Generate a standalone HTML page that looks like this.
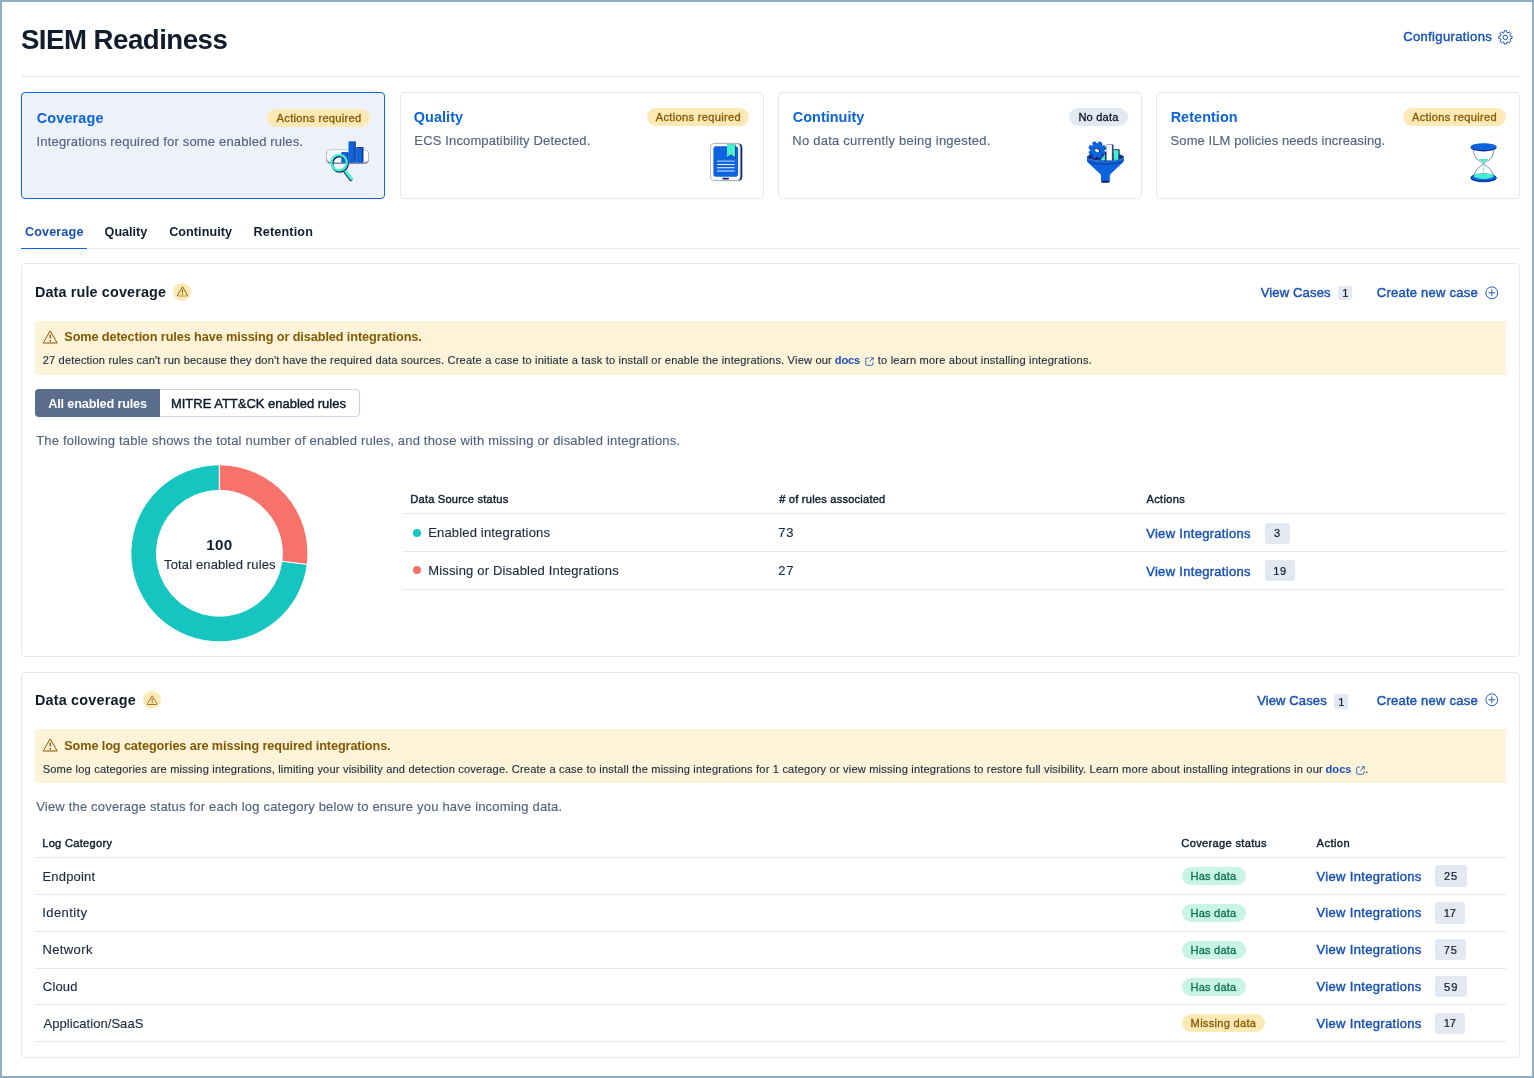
<!DOCTYPE html>
<html lang="en"><head><meta charset="utf-8"><title>SIEM Readiness</title>
<meta name="viewport" content="width=1534">
<style>
*{box-sizing:border-box;margin:0;padding:0}
html,body{width:1534px;height:1078px;overflow:hidden;background:#fff}
body{font-family:"Liberation Sans",sans-serif;color:#1d2a3e;-webkit-font-smoothing:antialiased}
#app{will-change:transform;position:relative;width:1534px;height:1078px;overflow:hidden}
#frame{position:absolute;left:0;top:0;width:1534px;height:1078px;border:2px solid #8fafc0;z-index:9;pointer-events:none}
.abs,.t,.ic{position:absolute}
.t{white-space:nowrap;display:block;font-weight:400}
a.t{text-decoration:none}
button.t{background:none;border:0;font-family:inherit;padding:0;margin:0}
.ic{display:block;overflow:visible}
.hr{position:absolute;height:1px;background:#e3e8f2}
.card{position:absolute;top:92px;width:364px;height:107px;border-radius:4px;border:1px solid #e3e8f2;background:#fff}
.card.sel{border-color:#0b64dd;background:#ecf1fa;box-shadow:inset 0 0 0 1px #f3f4f9}
.pill{position:absolute;border-radius:9px}
.panel{position:absolute;left:21px;width:1499px;border:1px solid #e3e8f2;border-radius:4px;background:#fff}
.callout{position:absolute;background:#fdf3d8}
.cnt{position:absolute;background:#e3e8f2;border-radius:3px}
.circ{position:absolute;border-radius:50%}
ul,li{list-style:none}
</style></head><body><div id="app">
<header>
<h1 class="t" style="left:20.91px;top:24.00px;font-size:27.6px;line-height:31px;color:#111c2c;font-weight:700;letter-spacing:-0.483px;">SIEM Readiness</h1>
<a class="t" style="left:1403.15px;top:29.00px;font-size:13.0px;line-height:15px;color:#1750ba;letter-spacing:0.368px;-webkit-text-stroke:0.42px currentColor;">Configurations</a>
<svg class="ic" style="left:1498.30px;top:29.60px" width="14.8" height="14.8" viewBox="0 0 16 16"><path d="M6.56 2.59 L6.80 0.80 L9.20 0.80 L9.44 2.59 L10.81 3.16 L12.24 2.06 L13.94 3.76 L12.84 5.19 L13.41 6.56 L15.20 6.80 L15.20 9.20 L13.41 9.44 L12.84 10.81 L13.94 12.24 L12.24 13.94 L10.81 12.84 L9.44 13.41 L9.20 15.20 L6.80 15.20 L6.56 13.41 L5.19 12.84 L3.76 13.94 L2.06 12.24 L3.16 10.81 L2.59 9.44 L0.80 9.20 L0.80 6.80 L2.59 6.56 L3.16 5.19 L2.06 3.76 L3.76 2.06 L5.19 3.16Z" fill="none" stroke="#1750ba" stroke-width="1.05" stroke-linejoin="round"/><circle cx="8" cy="8" r="2.4" fill="none" stroke="#1750ba" stroke-width="1.05"/></svg>
<div class="hr" style="left:21px;top:76px;width:1499px"></div>
</header>
<section id="cards">
<article class="card sel" style="left:21px">
<h3 class="t" style="left:14.72px;top:16.80px;font-size:14.4px;line-height:16px;color:#0b64dd;font-weight:700;letter-spacing:0.163px;">Coverage</h3>
<p class="t" style="left:14.53px;top:40.80px;font-size:13.0px;line-height:15px;color:#516381;letter-spacing:0.177px;-webkit-text-stroke:0.14px currentColor;">Integrations required for some enabled rules.</p>
<span class="pill" style="left:245.00px;top:16.00px;width:103.00px;height:18px;background:#fde9b5"></span>
<span class="t" style="left:254.60px;top:18.90px;font-size:11.1px;line-height:12px;color:#825803;letter-spacing:0.294px;-webkit-text-stroke:0.3px currentColor;">Actions required</span>
<svg class="ic" style="left:298.00px;top:43.00px" width="56" height="50" viewBox="320 136 56 50" >
<rect x="326.3" y="150.2" width="42.6" height="13.4" rx="4.2" fill="#14246b"/>
<rect x="326.6" y="149.7" width="42" height="12.7" rx="4" fill="#fff" stroke="#bcc3d6" stroke-width="0.9"/>
<rect x="342" y="152.3" width="6.6" height="10.2" fill="#14246b"/>
<rect x="341.2" y="152.3" width="6.2" height="10.2" fill="#0b64dd"/>
<rect x="349" y="141.4" width="6.8" height="21.1" rx="0.6" fill="#14246b"/>
<rect x="348.5" y="141.8" width="6.1" height="20.7" fill="#0b64dd"/>
<rect x="356.6" y="147.1" width="6.8" height="15.4" rx="0.5" fill="#14246b"/>
<rect x="356.2" y="147.6" width="6" height="14.9" fill="#0b64dd"/>
<circle cx="339.9" cy="163.8" r="7.8" fill="none" stroke="#14246b" stroke-width="2.4"/>
<path d="M345.4 172.2L350.9 179.4" stroke="#14246b" stroke-width="3.3" stroke-linecap="round"/>
<path d="M345.8 171.6L351.3 178.7" stroke="#48efcf" stroke-width="2.9" stroke-linecap="round"/>
<circle cx="339.1" cy="162.6" r="7.8" fill="none" stroke="#48efcf" stroke-width="2.3"/>
</svg>
</article>
<article class="card" style="left:400px">
<h3 class="t" style="left:12.72px;top:15.80px;font-size:14.4px;line-height:16px;color:#0b64dd;font-weight:700;letter-spacing:0.102px;">Quality</h3>
<p class="t" style="left:13.36px;top:39.80px;font-size:13.0px;line-height:15px;color:#516381;letter-spacing:0.140px;-webkit-text-stroke:0.14px currentColor;">ECS Incompatibility Detected.</p>
<span class="pill" style="left:246.00px;top:15.00px;width:102.20px;height:18px;background:#fde9b5"></span>
<span class="t" style="left:254.80px;top:17.90px;font-size:11.1px;line-height:12px;color:#825803;letter-spacing:0.308px;-webkit-text-stroke:0.3px currentColor;">Actions required</span>
<svg class="ic" style="left:305.00px;top:46.00px" width="42" height="46" viewBox="706 139 42 46" >
<rect x="711.6" y="143.4" width="30.7" height="37.4" rx="4" fill="#14246b"/>
<rect x="710.5" y="143.4" width="29.7" height="37.2" rx="3.6" fill="#fff" stroke="#aab1c6" stroke-width="0.9"/>
<rect x="713.4" y="146.3" width="24.7" height="30.4" rx="2.8" fill="#0b64dd"/>
<path d="M727.3 144.4h8.3v13.6l-4.1-2.9-4.2 2.9z" fill="#14246b"/>
<path d="M727 144.2h8v13l-4-2.8-4 2.8z" fill="#48efcf"/>
<path d="M717 161.2h17.6M717 171h17.6" stroke="#fff" stroke-opacity=".6" stroke-width="1.3"/>
<path d="M717 164.5h17.6M717 167.7h17.6" stroke="#fff" stroke-opacity=".95" stroke-width="1.1"/>
<rect x="722.3" y="177.8" width="6.8" height="1.6" rx="0.8" fill="#14246b"/>
</svg>
</article>
<article class="card" style="left:778px">
<h3 class="t" style="left:13.82px;top:15.80px;font-size:14.4px;line-height:16px;color:#0b64dd;font-weight:700;letter-spacing:0.039px;">Continuity</h3>
<p class="t" style="left:13.36px;top:39.80px;font-size:13.0px;line-height:15px;color:#516381;letter-spacing:0.225px;-webkit-text-stroke:0.14px currentColor;">No data currently being ingested.</p>
<span class="pill" style="left:290.00px;top:15.00px;width:59.00px;height:18px;background:#e3e8f2"></span>
<span class="t" style="left:299.41px;top:17.90px;font-size:11.1px;line-height:12px;color:#0a1424;letter-spacing:0.182px;-webkit-text-stroke:0.3px currentColor;">No data</span>
<svg class="ic" style="left:303.00px;top:45.00px" width="48" height="48" viewBox="1082 138 48 48" >
<ellipse cx="1105.4" cy="157" rx="18.5" ry="4" fill="#1a2f80"/>
<path d="M1098.47 144.66 L1099.56 142.63 L1101.99 143.64 L1101.32 145.84 L1102.56 147.08 L1104.76 146.41 L1105.77 148.84 L1103.74 149.93 L1103.74 151.67 L1105.77 152.76 L1104.76 155.19 L1102.56 154.52 L1101.32 155.76 L1101.99 157.96 L1099.56 158.97 L1098.47 156.94 L1096.73 156.94 L1095.64 158.97 L1093.21 157.96 L1093.88 155.76 L1092.64 154.52 L1090.44 155.19 L1089.43 152.76 L1091.46 151.67 L1091.46 149.93 L1089.43 148.84 L1090.44 146.41 L1092.64 147.08 L1093.88 145.84 L1093.21 143.64 L1095.64 142.63 L1096.73 144.66Z" fill="#14246b" stroke="#14246b" stroke-width="1" stroke-linejoin="round"/>
<path d="M1097.97 143.76 L1099.06 141.73 L1101.49 142.74 L1100.82 144.94 L1102.06 146.18 L1104.26 145.51 L1105.27 147.94 L1103.24 149.03 L1103.24 150.77 L1105.27 151.86 L1104.26 154.29 L1102.06 153.62 L1100.82 154.86 L1101.49 157.06 L1099.06 158.07 L1097.97 156.04 L1096.23 156.04 L1095.14 158.07 L1092.71 157.06 L1093.38 154.86 L1092.14 153.62 L1089.94 154.29 L1088.93 151.86 L1090.96 150.77 L1090.96 149.03 L1088.93 147.94 L1089.94 145.51 L1092.14 146.18 L1093.38 144.94 L1092.71 142.74 L1095.14 141.73 L1096.23 143.76Z" fill="#0b64dd" stroke="#0b64dd" stroke-width="1" stroke-linejoin="round"/>
<ellipse cx="1097.4" cy="150.3" rx="2.6" ry="2.1" fill="#14246b" transform="rotate(30 1097.4 150.3)"/>
<ellipse cx="1097" cy="150.6" rx="2.1" ry="1.5" fill="#fff" transform="rotate(30 1097 150.6)"/>
<path d="M1100.2 160.2l4.9-6.2v6.6z" fill="#48efcf"/>
<rect x="1105.2" y="152" width="1.6" height="9" fill="#14246b"/>
<rect x="1106.6" y="144.4" width="6.9" height="16.2" rx="0.8" fill="#14246b"/>
<rect x="1106.6" y="144.7" width="5.4" height="15.9" rx="0.6" fill="#fff" stroke="#9aa3bd" stroke-width="0.5"/>
<rect x="1113.6" y="149.2" width="6" height="10.6" fill="#14246b"/>
<rect x="1113.7" y="150.1" width="4.7" height="9.8" fill="#48efcf"/>
<path d="M1086.9 157 A18.5 4 0 0 0 1123.9 157 L1123.9 160.2 Q1123.9 161.6 1122.6 162.8 L1110.6 174 Q1109.8 174.8 1109.8 176 L1109.8 181.6 A4.4 1.1 0 0 1 1101 181.6 L1101 176 Q1101 174.8 1100.2 174 L1088.2 162.8 Q1086.9 161.6 1086.9 160.2 Z" fill="#0b64dd"/>
<path d="M1087.3 160.6 A18.3 4.2 0 0 0 1123.5 160.6" fill="none" stroke="#14246b" stroke-width="0.7"/>
<ellipse cx="1105.4" cy="181.8" rx="4.3" ry="1" fill="#14246b"/>
</svg>
</article>
<article class="card" style="left:1156px">
<h3 class="t" style="left:13.66px;top:15.80px;font-size:14.4px;line-height:16px;color:#0b64dd;font-weight:700;letter-spacing:0.070px;">Retention</h3>
<p class="t" style="left:13.62px;top:39.80px;font-size:13.0px;line-height:15px;color:#516381;letter-spacing:0.083px;-webkit-text-stroke:0.14px currentColor;">Some ILM policies needs increasing.</p>
<span class="pill" style="left:246.00px;top:15.00px;width:102.60px;height:18px;background:#fde9b5"></span>
<span class="t" style="left:255.00px;top:17.90px;font-size:11.1px;line-height:12px;color:#825803;letter-spacing:0.301px;-webkit-text-stroke:0.3px currentColor;">Actions required</span>
<svg class="ic" style="left:309.00px;top:47.00px" width="36" height="44" viewBox="1466 140 36 44" >
<ellipse cx="1483.6" cy="178.2" rx="13" ry="4.1" fill="#0a3fae"/>
<ellipse cx="1483.6" cy="177.4" rx="12.6" ry="3.6" fill="#0b64dd"/>
<ellipse cx="1483.6" cy="177.6" rx="12.6" ry="3.6" fill="none" stroke="#0a2f9a" stroke-width="0.8"/>
<path d="M1474.4 173.8h18.5l.6 2.2a9.6 2.9 0 0 1-19.7 0z" fill="#48efcf"/>
<path d="M1473.4 150.4C1474.4 157.6 1477.4 160.2 1480.4 161.2 1482.2 162 1483 162.6 1483 163.4 1483 164.4 1481.6 165.6 1479.6 167 1476.4 169.4 1474.8 172 1474.2 175" fill="none" stroke="#66708f" stroke-width="0.8"/>
<path d="M1493.8 150.4C1492.8 157.6 1489.8 160.2 1486.8 161.2 1485 162 1484.2 162.6 1484.2 163.4 1484.2 164.4 1485.6 165.6 1487.6 167 1490.8 169.4 1492.4 172 1493 175" fill="none" stroke="#66708f" stroke-width="0.8"/>
<path d="M1478.6 158.9h10c-1.4 1.4-3 2-4 2.8-.5.6-.6 1.4-.6 1.8h-.8c0-.4-.1-1.2-.6-1.8-1-.8-2.600-1.400-4-2.800z" fill="#48efcf"/>
<path d="M1483.6 163.4v10.4" stroke="#48efcf" stroke-width="0.9" stroke-dasharray="3.2 0.8"/>
<ellipse cx="1483.6" cy="147.6" rx="13" ry="3.9" fill="#0f2a86"/>
<ellipse cx="1483.6" cy="146.7" rx="12.9" ry="3.5" fill="#0b64dd"/>
</svg>
</article>
</section>
<nav id="tabs">
<a class="t" style="left:24.90px;top:225.00px;font-size:12.6px;line-height:14px;color:#1750ba;font-weight:700;letter-spacing:0.157px;">Coverage</a>
<a class="t" style="left:104.60px;top:225.00px;font-size:12.6px;line-height:14px;color:#111c2c;font-weight:700;letter-spacing:0.005px;">Quality</a>
<a class="t" style="left:169.20px;top:225.00px;font-size:12.6px;line-height:14px;color:#111c2c;font-weight:700;letter-spacing:0.063px;">Continuity</a>
<a class="t" style="left:253.48px;top:225.00px;font-size:12.6px;line-height:14px;color:#111c2c;font-weight:700;letter-spacing:0.165px;">Retention</a>
<div class="hr" style="left:88px;top:248px;width:1432px;background:#e8ecf5"></div>
<div class="hr" style="left:21px;top:248px;width:66px;background:#0b64dd"></div>
</nav>
<section class="panel" style="top:263px;height:394px">
<h2 class="t" style="left:12.96px;top:20.00px;font-size:14.4px;line-height:16px;color:#111c2c;font-weight:700;letter-spacing:0.130px;">Data rule coverage</h2>
<span class="circ" style="left:151.00px;top:19.00px;width:18.0px;height:18.0px;background:#fde9b5"></span>
<svg class="ic" style="left:154.50px;top:22.10px" width="11.0" height="11.0" viewBox="0 0 16 16"><g fill="#825803"><path d="M8.55 9.5l.35-3.5a.9.9 0 1 0-1.8 0l.35 3.5a.55.55 0 0 0 1.1 0zM9 12a1 1 0 1 1-2 0 1 1 0 0 1 2 0z"/><path d="M8.86 1.5a1 1 0 0 0-1.72 0l-7 12A1 1 0 0 0 1 15h14a1 1 0 0 0 .86-1.5l-7-12zM1 14L8 2l7 12H1z"/></g></svg>
<a class="t" style="left:1238.70px;top:21.00px;font-size:13.0px;line-height:15px;color:#1750ba;letter-spacing:0.161px;-webkit-text-stroke:0.42px currentColor;">View Cases</a>
<span class="cnt" style="left:1316.10px;top:22.30px;width:13.80px;height:13.40px;border-radius:2px"></span>
<span class="t" style="left:1320.27px;top:22.90px;font-size:11.1px;line-height:12px;color:#111c2c;-webkit-text-stroke:0.22px currentColor;">1</span>
<a class="t" style="left:1354.75px;top:21.00px;font-size:13.0px;line-height:15px;color:#1750ba;letter-spacing:0.238px;-webkit-text-stroke:0.42px currentColor;">Create new case</a>
<svg class="ic" style="left:1463.20px;top:21.50px" width="13.6" height="13.6" viewBox="0 0 16 16"><circle cx="8" cy="8" r="7" fill="none" stroke="#1750ba" stroke-width="1.1"/><path d="M8 4v8M4 8h8" stroke="#1750ba" stroke-width="1.1" fill="none"/></svg>
<div class="callout" style="left:13px;top:57px;width:1471px;height:54px">
<svg class="ic" style="left:7.80px;top:9.30px" width="14.4" height="14.4" viewBox="0 0 16 16"><g fill="#825803"><path d="M8.55 9.5l.35-3.5a.9.9 0 1 0-1.8 0l.35 3.5a.55.55 0 0 0 1.1 0zM9 12a1 1 0 1 1-2 0 1 1 0 0 1 2 0z"/><path d="M8.86 1.5a1 1 0 0 0-1.72 0l-7 12A1 1 0 0 0 1 15h14a1 1 0 0 0 .86-1.5l-7-12zM1 14L8 2l7 12H1z"/></g></svg>
<h4 class="t" style="left:29.28px;top:9.00px;font-size:12.7px;line-height:14px;color:#825803;font-weight:700;letter-spacing:-0.095px;">Some detection rules have missing or disabled integrations.</h4>
<p class="t" style="left:7.65px;top:33.00px;font-size:11.1px;line-height:12px;color:#1d2a3e;letter-spacing:0.175px;-webkit-text-stroke:0.14px currentColor;">27 detection rules can't run because they don't have the required data sources. Create a case to initiate a task to install or enable the integrations. View our</p><a class="t" style="left:799.86px;top:33.00px;font-size:11.1px;line-height:12px;color:#1750ba;font-weight:700;letter-spacing:-0.216px;">docs</a><svg class="ic" style="left:829.20px;top:34.60px" width="11" height="11" viewBox="0 0 16 16"><path d="M7 3H4a1.5 1.5 0 0 0-1.5 1.5v7.5A1.5 1.5 0 0 0 4 13.5h7.5A1.5 1.5 0 0 0 13 12V9" fill="none" stroke="#1750ba" stroke-width="1.2"/><path d="M9.5 2.5h4v4M13.3 2.7L7.5 8.5" fill="none" stroke="#1750ba" stroke-width="1.2"/></svg><span class="t" style="left:842.83px;top:33.00px;font-size:11.1px;line-height:12px;color:#1d2a3e;letter-spacing:0.185px;-webkit-text-stroke:0.14px currentColor;">to learn more about installing integrations.</span>
</div>
<div class="abs" style="left:13px;top:125px;width:325px;height:28px;border:1px solid #cad3e2;border-radius:4px;background:#fff"></div>
<div class="abs" style="left:13px;top:125px;width:125px;height:28px;border-radius:4px 0 0 4px;background:#5a6d8c"></div>
<button class="t" style="left:26.25px;top:132.50px;font-size:12.7px;line-height:14px;color:#ffffff;font-weight:700;letter-spacing:-0.170px;">All enabled rules</button>
<button class="t" style="left:148.96px;top:131.50px;font-size:13.0px;line-height:15px;color:#111c2c;letter-spacing:-0.014px;-webkit-text-stroke:0.42px currentColor;">MITRE ATT&amp;CK enabled rules</button>
<p class="t" style="left:14.14px;top:169.00px;font-size:13.0px;line-height:15px;color:#516381;letter-spacing:0.195px;-webkit-text-stroke:0.14px currentColor;">The following table shows the total number of enabled rules, and those with missing or disabled integrations.</p>
<svg class="ic" style="left:103.00px;top:195.00px" width="190" height="190" viewBox="125 459 190 190" ><path d="M307.20 564.39A88.5 88.5 0 1 1 219.40 464.80L219.40 490.30A63.0 63.0 0 1 0 281.90 561.20Z" fill="#16c5c0" stroke="#fff" stroke-width="0.9"/><path d="M219.40 464.80A88.5 88.5 0 0 1 307.20 564.39L281.90 561.20A63.0 63.0 0 0 0 219.40 490.30Z" fill="#f6726a" stroke="#fff" stroke-width="0.9"/></svg>
<strong class="t" style="left:184.29px;top:271.80px;font-size:15.2px;line-height:17px;color:#111c2c;font-weight:700;letter-spacing:0.261px;">100</strong>
<span class="t" style="left:142.04px;top:293.00px;font-size:13.0px;line-height:15px;color:#1d2a3e;letter-spacing:0.133px;-webkit-text-stroke:0.14px currentColor;">Total enabled rules</span>
<div class="abs" role="table" style="left:381px;top:221px;width:1103px;height:106px">
<span class="t" style="left:7.31px;top:8.20px;font-size:11.1px;line-height:12px;color:#111c2c;letter-spacing:0.208px;-webkit-text-stroke:0.4px currentColor;">Data Source status</span>
<span class="t" style="left:376.20px;top:8.20px;font-size:11.1px;line-height:12px;color:#111c2c;letter-spacing:0.216px;-webkit-text-stroke:0.4px currentColor;"># of rules associated</span>
<span class="t" style="left:743.40px;top:8.20px;font-size:11.1px;line-height:12px;color:#111c2c;letter-spacing:0.351px;-webkit-text-stroke:0.4px currentColor;">Actions</span>
<div class="hr" style="left:0;top:28px;width:1103px"></div>
<div class="hr" style="left:0;top:66px;width:1103px"></div>
<div class="hr" style="left:0;top:104px;width:1103px"></div>
<span class="circ" style="left:10.20px;top:44.00px;width:8px;height:8px;background:#16c5c0"></span>
<span class="t" style="left:25.16px;top:39.80px;font-size:13.0px;line-height:15px;color:#1d2a3e;letter-spacing:0.172px;-webkit-text-stroke:0.14px currentColor;">Enabled integrations</span>
<span class="t" style="left:375.15px;top:39.80px;font-size:13.0px;line-height:15px;color:#1d2a3e;letter-spacing:0.850px;-webkit-text-stroke:0.14px currentColor;">73</span>
<a class="t" style="left:743.20px;top:40.80px;font-size:13.0px;line-height:15px;color:#1750ba;letter-spacing:0.304px;-webkit-text-stroke:0.42px currentColor;">View Integrations</a>
<span class="cnt" style="left:861.90px;top:37.70px;width:25.00px;height:21.2px"></span><span class="t" style="left:871.01px;top:42.25px;font-size:11.1px;line-height:12px;color:#111c2c;-webkit-text-stroke:0.22px currentColor;">3</span>
<span class="circ" style="left:10.20px;top:81.30px;width:8px;height:8px;background:#f6726a"></span>
<span class="t" style="left:25.16px;top:77.70px;font-size:13.0px;line-height:15px;color:#1d2a3e;letter-spacing:0.178px;-webkit-text-stroke:0.14px currentColor;">Missing or Disabled Integrations</span>
<span class="t" style="left:375.15px;top:77.70px;font-size:13.0px;line-height:15px;color:#1d2a3e;letter-spacing:0.850px;-webkit-text-stroke:0.14px currentColor;">27</span>
<a class="t" style="left:743.20px;top:78.70px;font-size:13.0px;line-height:15px;color:#1750ba;letter-spacing:0.304px;-webkit-text-stroke:0.42px currentColor;">View Integrations</a>
<span class="cnt" style="left:861.90px;top:75.20px;width:30.00px;height:21.2px"></span><span class="t" style="left:870.37px;top:79.75px;font-size:11.1px;line-height:12px;color:#111c2c;letter-spacing:0.405px;-webkit-text-stroke:0.22px currentColor;">19</span>
</div>
</section>
<section class="panel" style="top:672px;height:386px">
<h2 class="t" style="left:12.96px;top:18.70px;font-size:14.4px;line-height:16px;color:#111c2c;font-weight:700;letter-spacing:0.191px;">Data coverage</h2>
<span class="circ" style="left:120.80px;top:17.80px;width:18.6px;height:18.6px;background:#fde9b5"></span>
<svg class="ic" style="left:124.95px;top:21.58px" width="10.3" height="10.3" viewBox="0 0 16 16"><g fill="#825803"><path d="M8.55 9.5l.35-3.5a.9.9 0 1 0-1.8 0l.35 3.5a.55.55 0 0 0 1.1 0zM9 12a1 1 0 1 1-2 0 1 1 0 0 1 2 0z"/><path d="M8.86 1.5a1 1 0 0 0-1.72 0l-7 12A1 1 0 0 0 1 15h14a1 1 0 0 0 .86-1.5l-7-12zM1 14L8 2l7 12H1z"/></g></svg>
<a class="t" style="left:1235.20px;top:19.70px;font-size:13.0px;line-height:15px;color:#1750ba;letter-spacing:0.117px;-webkit-text-stroke:0.42px currentColor;">View Cases</a>
<span class="cnt" style="left:1311.90px;top:21.30px;width:14.00px;height:14.40px;border-radius:2px"></span>
<span class="t" style="left:1316.17px;top:23.20px;font-size:11.1px;line-height:12px;color:#111c2c;-webkit-text-stroke:0.22px currentColor;">1</span>
<a class="t" style="left:1354.75px;top:19.70px;font-size:13.0px;line-height:15px;color:#1750ba;letter-spacing:0.238px;-webkit-text-stroke:0.42px currentColor;">Create new case</a>
<svg class="ic" style="left:1463.20px;top:20.20px" width="13.6" height="13.6" viewBox="0 0 16 16"><circle cx="8" cy="8" r="7" fill="none" stroke="#1750ba" stroke-width="1.1"/><path d="M8 4v8M4 8h8" stroke="#1750ba" stroke-width="1.1" fill="none"/></svg>
<div class="callout" style="left:13px;top:56px;width:1471px;height:54px">
<svg class="ic" style="left:7.80px;top:9.30px" width="14.4" height="14.4" viewBox="0 0 16 16"><g fill="#825803"><path d="M8.55 9.5l.35-3.5a.9.9 0 1 0-1.8 0l.35 3.5a.55.55 0 0 0 1.1 0zM9 12a1 1 0 1 1-2 0 1 1 0 0 1 2 0z"/><path d="M8.86 1.5a1 1 0 0 0-1.72 0l-7 12A1 1 0 0 0 1 15h14a1 1 0 0 0 .86-1.5l-7-12zM1 14L8 2l7 12H1z"/></g></svg>
<h4 class="t" style="left:29.28px;top:10.00px;font-size:12.7px;line-height:14px;color:#825803;font-weight:700;letter-spacing:-0.108px;">Some log categories are missing required integrations.</h4>
<p class="t" style="left:7.70px;top:34.20px;font-size:11.1px;line-height:12px;color:#1d2a3e;letter-spacing:0.174px;-webkit-text-stroke:0.14px currentColor;">Some log categories are missing integrations, limiting your visibility and detection coverage. Create a case to install the missing integrations for 1 category or view missing integrations to restore full visibility. Learn more about installing integrations in our</p><a class="t" style="left:1290.56px;top:34.20px;font-size:11.1px;line-height:12px;color:#1750ba;font-weight:700;letter-spacing:0.018px;">docs</a><svg class="ic" style="left:1320.00px;top:35.80px" width="11" height="11" viewBox="0 0 16 16"><path d="M7 3H4a1.5 1.5 0 0 0-1.5 1.5v7.5A1.5 1.5 0 0 0 4 13.5h7.5A1.5 1.5 0 0 0 13 12V9" fill="none" stroke="#1750ba" stroke-width="1.2"/><path d="M9.5 2.5h4v4M13.3 2.7L7.5 8.5" fill="none" stroke="#1750ba" stroke-width="1.2"/></svg><span class="t" style="left:1330.30px;top:34.20px;font-size:11.1px;line-height:12px;color:#1d2a3e;-webkit-text-stroke:0.14px currentColor;">.</span>
</div>
<p class="t" style="left:14.20px;top:125.80px;font-size:13.0px;line-height:15px;color:#516381;letter-spacing:0.188px;-webkit-text-stroke:0.14px currentColor;">View the coverage status for each log category below to ensure you have incoming data.</p>
<div class="abs" role="table" style="left:13px;top:157px;width:1471px;height:213px">
<span class="t" style="left:7.21px;top:7.30px;font-size:11.1px;line-height:12px;color:#111c2c;letter-spacing:0.289px;-webkit-text-stroke:0.4px currentColor;">Log Category</span>
<span class="t" style="left:1146.35px;top:7.30px;font-size:11.1px;line-height:12px;color:#111c2c;letter-spacing:0.319px;-webkit-text-stroke:0.4px currentColor;">Coverage status</span>
<span class="t" style="left:1281.60px;top:7.30px;font-size:11.1px;line-height:12px;color:#111c2c;letter-spacing:0.429px;-webkit-text-stroke:0.4px currentColor;">Action</span>
<div class="hr" style="left:0;top:27px;width:1471px"></div>
<div class="hr" style="left:0;top:64px;width:1471px"></div>
<div class="hr" style="left:0;top:101px;width:1471px"></div>
<div class="hr" style="left:0;top:138px;width:1471px"></div>
<div class="hr" style="left:0;top:174px;width:1471px"></div>
<div class="hr" style="left:0;top:211px;width:1471px"></div>
<span class="t" style="left:7.46px;top:39.10px;font-size:13.0px;line-height:15px;color:#1d2a3e;letter-spacing:0.194px;-webkit-text-stroke:0.14px currentColor;">Endpoint</span>
<span class="pill" style="left:1146.70px;top:37.20px;width:64.4px;height:17.8px;background:#c9f3e3"></span>
<span class="t" style="left:1155.61px;top:40.20px;font-size:11.1px;line-height:12px;color:#09724d;letter-spacing:0.163px;-webkit-text-stroke:0.3px currentColor;">Has data</span>
<a class="t" style="left:1281.60px;top:39.10px;font-size:13.0px;line-height:15px;color:#1750ba;letter-spacing:0.323px;-webkit-text-stroke:0.42px currentColor;">View Integrations</a>
<span class="cnt" style="left:1399.90px;top:35.30px;width:32.00px;height:21.4px"></span><span class="t" style="left:1409.10px;top:39.95px;font-size:11.1px;line-height:12px;color:#111c2c;letter-spacing:0.850px;-webkit-text-stroke:0.22px currentColor;">25</span>
<span class="t" style="left:7.33px;top:75.10px;font-size:13.0px;line-height:15px;color:#1d2a3e;letter-spacing:0.394px;-webkit-text-stroke:0.14px currentColor;">Identity</span>
<span class="pill" style="left:1146.70px;top:74.00px;width:64.4px;height:17.8px;background:#c9f3e3"></span>
<span class="t" style="left:1155.61px;top:77.00px;font-size:11.1px;line-height:12px;color:#09724d;letter-spacing:0.163px;-webkit-text-stroke:0.3px currentColor;">Has data</span>
<a class="t" style="left:1281.60px;top:75.10px;font-size:13.0px;line-height:15px;color:#1750ba;letter-spacing:0.323px;-webkit-text-stroke:0.42px currentColor;">View Integrations</a>
<span class="cnt" style="left:1399.90px;top:72.20px;width:30.30px;height:21.4px"></span><span class="t" style="left:1408.82px;top:76.85px;font-size:11.1px;line-height:12px;color:#111c2c;letter-spacing:-0.195px;-webkit-text-stroke:0.22px currentColor;">17</span>
<span class="t" style="left:7.46px;top:112.10px;font-size:13.0px;line-height:15px;color:#1d2a3e;letter-spacing:0.383px;-webkit-text-stroke:0.14px currentColor;">Network</span>
<span class="pill" style="left:1146.70px;top:111.00px;width:64.4px;height:17.8px;background:#c9f3e3"></span>
<span class="t" style="left:1155.61px;top:114.00px;font-size:11.1px;line-height:12px;color:#09724d;letter-spacing:0.163px;-webkit-text-stroke:0.3px currentColor;">Has data</span>
<a class="t" style="left:1281.60px;top:112.10px;font-size:13.0px;line-height:15px;color:#1750ba;letter-spacing:0.323px;-webkit-text-stroke:0.42px currentColor;">View Integrations</a>
<span class="cnt" style="left:1399.90px;top:109.00px;width:30.80px;height:21.4px"></span><span class="t" style="left:1408.70px;top:113.65px;font-size:11.1px;line-height:12px;color:#111c2c;letter-spacing:0.772px;-webkit-text-stroke:0.22px currentColor;">75</span>
<span class="t" style="left:7.85px;top:149.00px;font-size:13.0px;line-height:15px;color:#1d2a3e;letter-spacing:0.145px;-webkit-text-stroke:0.14px currentColor;">Cloud</span>
<span class="pill" style="left:1146.70px;top:148.00px;width:64.4px;height:17.8px;background:#c9f3e3"></span>
<span class="t" style="left:1155.61px;top:151.00px;font-size:11.1px;line-height:12px;color:#09724d;letter-spacing:0.163px;-webkit-text-stroke:0.3px currentColor;">Has data</span>
<a class="t" style="left:1281.60px;top:149.00px;font-size:13.0px;line-height:15px;color:#1750ba;letter-spacing:0.323px;-webkit-text-stroke:0.42px currentColor;">View Integrations</a>
<span class="cnt" style="left:1399.90px;top:146.00px;width:32.00px;height:21.4px"></span><span class="t" style="left:1409.11px;top:150.65px;font-size:11.1px;line-height:12px;color:#111c2c;letter-spacing:0.850px;-webkit-text-stroke:0.22px currentColor;">59</span>
<span class="t" style="left:8.50px;top:185.90px;font-size:13.0px;line-height:15px;color:#1d2a3e;letter-spacing:0.056px;-webkit-text-stroke:0.14px currentColor;">Application/SaaS</span>
<span class="pill" style="left:1146.70px;top:184.00px;width:83.2px;height:17.8px;background:#fde9b5"></span>
<span class="t" style="left:1155.61px;top:187.00px;font-size:11.1px;line-height:12px;color:#825803;letter-spacing:0.279px;-webkit-text-stroke:0.3px currentColor;">Missing data</span>
<a class="t" style="left:1281.60px;top:185.90px;font-size:13.0px;line-height:15px;color:#1750ba;letter-spacing:0.323px;-webkit-text-stroke:0.42px currentColor;">View Integrations</a>
<span class="cnt" style="left:1399.90px;top:182.60px;width:30.30px;height:21.4px"></span><span class="t" style="left:1408.82px;top:187.25px;font-size:11.1px;line-height:12px;color:#111c2c;letter-spacing:-0.195px;-webkit-text-stroke:0.22px currentColor;">17</span>
</div>
</section>
<div id="frame"></div>
</div></body></html>
